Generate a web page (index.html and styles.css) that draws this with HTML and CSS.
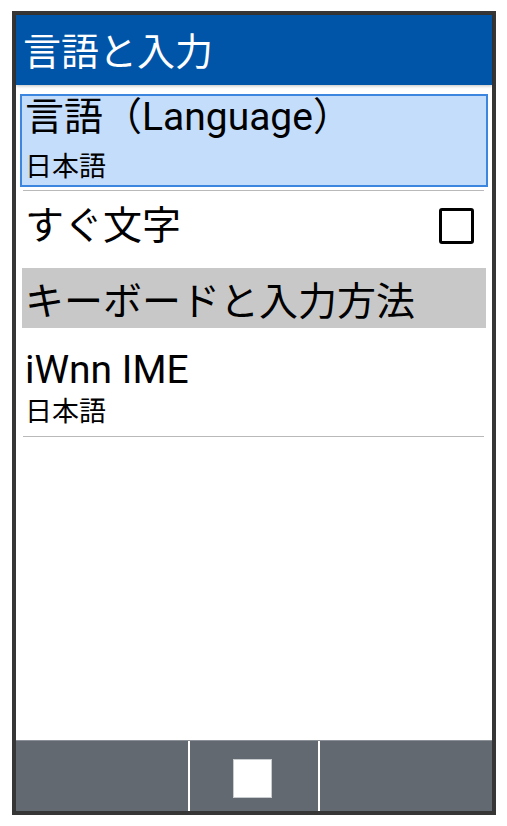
FILE: index.html
```html
<!DOCTYPE html>
<html lang="ja">
<head>
  <meta charset="UTF-8" />
  <meta name="viewport" content="width=device-width, initial-scale=1.0" />
  <title>言語と入力</title>
  <link rel="stylesheet" href="styles.css">
</head>
<body>
  <div class="phone">
    <div class="title-bar">言語と入力</div>

    <div class="content">
      <div class="list">
        <div class="item item-selected">
          <div class="item-title">言語（Language）</div>
          <div class="item-sub">日本語</div>
        </div>
        <div class="divider"></div>

        <div class="item item-check">
          <div class="item-title">すぐ文字</div>
          <span class="checkbox"></span>
        </div>

        <div class="section">キーボードと入力方法</div>

        <div class="item item-ime">
          <div class="item-title">iWnn IME</div>
          <div class="item-sub">日本語</div>
        </div>
        <div class="divider"></div>
      </div>
    </div>

    <div class="nav-bar">
      <div class="nav-key"></div>
      <div class="nav-key nav-center"><span class="nav-square"></span></div>
      <div class="nav-key"></div>
    </div>
  </div>
</body>
</html>
```

FILE: styles.css
```css
body {
  margin: 0;
  background: #fff;
  font-family: Roboto, "Noto Sans CJK JP", sans-serif;
  color: #000;
}

.phone {
  width: 476px;
  height: 796px;
  margin: 11px 0 0 12px;
  border: 4px solid #363636;
  display: flex;
  flex-direction: column;
  background: #fff;
}

.title-bar {
  height: 66px;
  flex-shrink: 0;
  display: flex;
  align-items: center;
  padding: 0 0 4px 7px;
  background: #0055a8;
  color: #fff;
  font-size: 38px;
  box-shadow: 0 1px 3px rgba(0, 0, 0, 0.25);
  position: relative;
}

.content {
  flex: 1;
  padding: 9px 4px 0;
}

.item {
  padding-left: 5px;
}

.item-title {
  font-size: 39px;
  line-height: 42px;
  white-space: nowrap;
}

.item-sub {
  font-size: 27px;
  line-height: 32px;
}

.item-selected {
  height: 89px;
  padding-left: 3px;
  background: #c4ddfb;
  border: 2px solid #3c86e0;
}

.item-selected .item-sub {
  margin-top: 13px;
}

.divider {
  height: 1px;
  margin: 3px 4px 0 3px;
  background: #b9b9b9;
}

.item-check {
  height: 70px;
  display: flex;
  align-items: center;
  justify-content: space-between;
  padding-right: 14px;
}

.checkbox {
  width: 29px;
  height: 30px;
  border: 3px solid #000;
  border-radius: 3px;
}

.section {
  height: 60px;
  margin: 7px 2px 0;
  padding-left: 3px;
  display: flex;
  align-items: center;
  background: #c8c8c8;
  font-size: 39px;
}

.item-ime {
  padding-top: 21px;
}

.item-ime .item-sub {
  margin-top: 5px;
  margin-bottom: 8px;
}

.item-ime + .divider {
  margin-top: 0;
}

.nav-bar {
  height: 70px;
  flex-shrink: 0;
  display: flex;
  gap: 2px;
  background: #fff;
  border-top: 1px solid #8a9096;
}

.nav-key {
  flex: 0 0 172px;
  background: #626970;
}

.nav-center {
  flex: 1;
  display: flex;
  align-items: center;
  justify-content: center;
}

.nav-square {
  width: 37px;
  height: 37px;
  margin: 4px 3px 0 0;
  background: #fff;
  border: 1px solid #c9cccf;
}
```
